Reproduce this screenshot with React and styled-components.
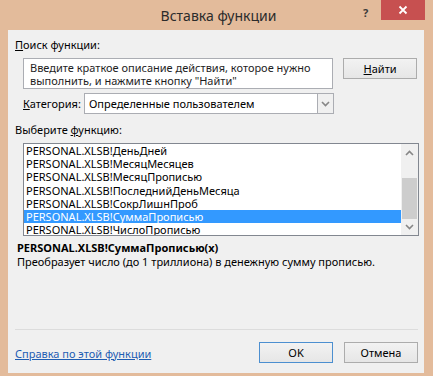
import styled, { createGlobalStyle } from "styled-components";

const Global = createGlobalStyle`
    html, body {
        margin: 0;
        padding: 0;
        background: #E3BB9B;
    }
    body {
        font-family: "Segoe UI", "Noto Sans", "Open Sans", sans-serif;
        font-size: 11px;
        color: #000;
    }
`

const items = [
    "PERSONAL.XLSB!ДеньДней",
    "PERSONAL.XLSB!МесяцМесяцев",
    "PERSONAL.XLSB!МесяцПрописью",
    "PERSONAL.XLSB!ПоследнийДеньМесяца",
    "PERSONAL.XLSB!СокрЛишнПроб",
    "PERSONAL.XLSB!СуммаПрописью",
    "PERSONAL.XLSB!ЧислоПрописью",
];

function Chevron({ up }) {
    return (
        <svg width="9" height="6" viewBox="0 0 9 6">
            <path d={up ? "M1 5 L4.5 1.5 L8 5" : "M1 1 L4.5 4.5 L8 1"} fill="none" stroke="#868686" strokeWidth="1.6" />
        </svg>
    );
}

function App() {
    return (
        <Window>
            <Global />
            <TitleBar>
                <Title>Вставка функции</Title>
                <Help>?</Help>
                <Close>
                    <svg width="10" height="10" viewBox="0 0 10 10">
                        <path d="M1.5 1.5 L8.5 8.5 M8.5 1.5 L1.5 8.5" stroke="#fff" strokeWidth="1.8" />
                    </svg>
                </Close>
            </TitleBar>
            <Client>
                <Label><u>П</u>оиск функции:</Label>
                <SearchRow>
                    <SearchBox>
                        Введите краткое описание действия, которое нужно
                        <br />
                        выполнить, и нажмите кнопку "Найти"
                    </SearchBox>
                    <Button><u>Н</u>айти</Button>
                </SearchRow>
                <CategoryRow>
                    <CategoryLabel><u>К</u>атегория:</CategoryLabel>
                    <Select>
                        <SelectText>Определенные пользователем</SelectText>
                        <SelectArrow><Chevron /></SelectArrow>
                    </Select>
                </CategoryRow>
                <ListLabel>Выберите <u>ф</u>ункцию:</ListLabel>
                <List>
                    <Rows>
                        {items.map((name, i) => (
                            <Row key={name} $selected={i === 5}>{name}</Row>
                        ))}
                    </Rows>
                    <Scrollbar>
                        <ScrollArrow><Chevron up /></ScrollArrow>
                        <Track>
                            <Thumb />
                        </Track>
                        <ScrollArrow><Chevron /></ScrollArrow>
                    </Scrollbar>
                </List>
                <Signature>PERSONAL.XLSB!СуммаПрописью(x)</Signature>
                <Description>Преобразует число (до 1 триллиона) в денежную сумму прописью.</Description>
                <Separator />
                <Footer>
                    <HelpLink>Справка по этой функции</HelpLink>
                    <Buttons>
                        <Button $default>OK</Button>
                        <Button>Отмена</Button>
                    </Buttons>
                </Footer>
            </Client>
        </Window>
    );
}

const Window = styled.div`
    width: 433px;
    height: 376px;
    display: flex;
    flex-direction: column;
    background: #E3BB9B;
    overflow: hidden;
`

const TitleBar = styled.div`
    height: 30px;
    position: relative;
    display: flex;
    justify-content: center;
`

const Title = styled.div`
    font-size: 14px;
    line-height: 32px;
    color: #2B2B2B;
    margin-left: 4px;
`

const Help = styled.div`
    position: absolute;
    left: 363px;
    top: 5px;
    font-size: 11px;
    font-weight: bold;
    color: #3A3A3A;
`

const Close = styled.div`
    position: absolute;
    left: 381px;
    top: 0;
    width: 44px;
    height: 20px;
    background: #C75050;
    display: flex;
    align-items: center;
    justify-content: center;
`

const Client = styled.div`
    margin: 0 9px 0 8px;
    height: 343px;
    background: #F0F0F0;
    padding: 7px 7px 0 7px;
    box-sizing: border-box;
    display: flex;
    flex-direction: column;
`

const Label = styled.div`
    line-height: 16px;
    white-space: nowrap;
`

const SearchRow = styled.div`
    display: flex;
    gap: 10px;
    margin: 5px 0 0 8px;
`

const SearchBox = styled.div`
    width: 311px;
    height: 31px;
    box-sizing: border-box;
    border: 1px solid #ABADB3;
    background: #fff;
    padding: 2px 6px;
    line-height: 13px;
    white-space: nowrap;
    color: #1E1E1E;
`

const Button = styled.div`
    width: 74px;
    height: 21px;
    box-sizing: border-box;
    border: 1px solid ${p => p.$default ? "#4C8FD0" : "#ACACAC"};
    background: linear-gradient(#F2F2F2, #E6E6E6);
    display: flex;
    align-items: center;
    justify-content: center;
    line-height: 16px;
`

const CategoryRow = styled.div`
    display: flex;
    align-items: center;
    gap: 5px;
    margin: 4px 0 0 8px;
`

const CategoryLabel = styled(Label)`
    width: 56px;
`

const Select = styled.div`
    width: 250px;
    height: 21px;
    box-sizing: border-box;
    border: 1px solid #ABADB3;
    background: #fff;
    display: flex;
    align-items: center;
`

const SelectText = styled.div`
    flex: 1;
    padding-left: 4px;
`

const SelectArrow = styled.div`
    width: 15px;
    height: 19px;
    border-left: 1px solid #ABADB3;
    background: #F0F0F0;
    display: flex;
    align-items: center;
    justify-content: center;
`

const ListLabel = styled(Label)`
    margin-top: 8px;
`

const List = styled.div`
    margin: 5px 0 0 8px;
    width: 396px;
    height: 93px;
    box-sizing: border-box;
    border: 1px solid #828790;
    background: #fff;
    display: flex;
    overflow: hidden;
`

const Rows = styled.div`
    flex: 1;
    display: flex;
    flex-direction: column;
`

const Row = styled.div`
    height: 13.2px;
    line-height: 13px;
    padding-left: 2px;
    white-space: nowrap;
    flex-shrink: 0;
    background: ${p => p.$selected ? "#3399FF" : "transparent"};
    color: ${p => p.$selected ? "#fff" : "#000"};
`

const Scrollbar = styled.div`
    width: 17px;
    background: #F0F0F0;
    display: flex;
    flex-direction: column;
`

const ScrollArrow = styled.div`
    height: 17px;
    display: flex;
    align-items: center;
    justify-content: center;
`

const Track = styled.div`
    flex: 1;
    position: relative;
`

const Thumb = styled.div`
    position: absolute;
    left: 1px;
    right: 1px;
    top: 17px;
    height: 41px;
    background: #CDCDCD;
`

const Signature = styled.div`
    margin: 5px 0 0 2px;
    font-weight: bold;
    line-height: 14px;
`

const Description = styled.div`
    margin-left: 2px;
    line-height: 14px;
`

const Separator = styled.div`
    margin-top: 60px;
    height: 1px;
    background: #DCDCDC;
    width: 403px;
`

const Footer = styled.div`
    display: flex;
    justify-content: space-between;
    align-items: center;
    margin-top: 12px;
    padding-right: 0;
    width: 403px;
`

const HelpLink = styled.div`
    color: #1E5DB3;
    text-decoration: underline;
    padding-top: 1px;
`

const Buttons = styled.div`
    display: flex;
    gap: 11px;
`

export default App;
